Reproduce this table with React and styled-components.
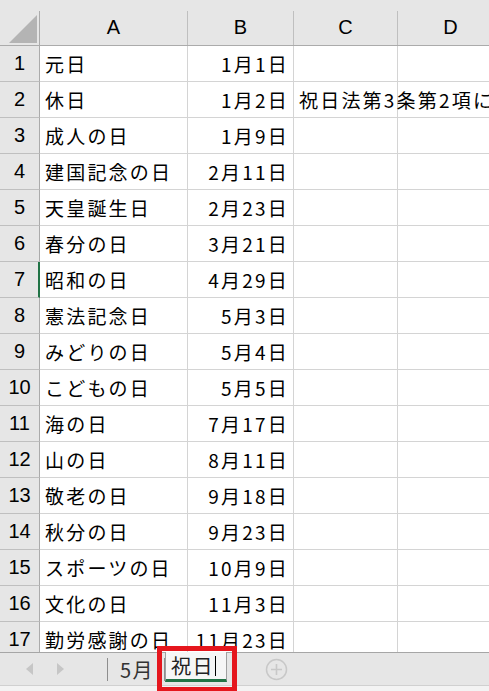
import React from 'react';
import styled, { createGlobalStyle } from 'styled-components';

const GlobalStyle = createGlobalStyle`
  html, body {
    margin: 0;
    padding: 0;
    overflow: hidden;
    background: #ffffff;
  }
`;

const COLS = '40px 148px 106px 104px 106px';

const Sheet = styled.div`
  position: relative;
  display: flex;
  flex-direction: column;
  width: 489px;
  height: 691px;
  overflow: hidden;
  font-family: "Noto Sans CJK JP", "Noto Sans", sans-serif;
  color: #000;
`;

const HeaderRow = styled.div`
  display: grid;
  grid-template-columns: ${COLS};
  height: 46px;
  padding-top: 11px;
  box-sizing: border-box;
  background: #e6e6e6;
  border-bottom: 1px solid #ababab;
  flex-shrink: 0;
`;

const Corner = styled.div`
  position: relative;
  border-right: 1px solid #ababab;
`;

const CornerTriangle = styled.div`
  position: absolute;
  left: 9px;
  top: 4px;
  width: 0;
  height: 0;
  border-style: solid;
  border-width: 0 0 28px 28px;
  border-color: transparent transparent #b4b4b4 transparent;
`;

const ColHead = styled.div`
  display: flex;
  align-items: center;
  justify-content: center;
  border-right: 1px solid #bfbfbf;
  font-family: "Liberation Sans", Arial, sans-serif;
  font-size: 20px;
  padding-bottom: 2px;
`;

const Body = styled.div`
  flex: 1;
  min-height: 0;
  overflow: hidden;
`;

const Row = styled.div`
  display: grid;
  grid-template-columns: ${COLS};
  height: 36px;
`;

const RowHead = styled.div`
  display: flex;
  align-items: center;
  justify-content: center;
  background: #e6e6e6;
  border-right: ${(p) => (p.active ? '2px solid #217346' : '1px solid #ababab')};
  border-bottom: 1px solid #bfbfbf;
  font-family: "Liberation Sans", Arial, sans-serif;
  font-size: 20px;
  padding-left: ${(p) => (p.active ? '1px' : '0')};
`;

const Cell = styled.div`
  display: flex;
  align-items: center;
  justify-content: ${(p) => (p.right ? 'flex-end' : 'flex-start')};
  padding: 0 4px 0 5px;
  border-right: 1px solid #d4d4d4;
  border-bottom: 1px solid #d4d4d4;
  font-size: 19px;
  letter-spacing: 2.2px;
  white-space: nowrap;
  overflow: visible;
  min-width: 0;
  position: relative;
  z-index: ${(p) => (p.overflow ? 1 : 0)};
`;

const TabBar = styled.div`
  display: flex;
  align-items: stretch;
  height: 32px;
  background: #e6e6e6;
  border-top: 1px solid #a6a6a6;
  border-bottom: 1px solid #d0d0d0;
  flex-shrink: 0;
`;

const NavArrows = styled.div`
  display: flex;
  align-items: center;
  gap: 24px;
  padding-left: 26px;
  width: 107px;
  box-sizing: border-box;
`;

const Arrow = styled.div`
  width: 0;
  height: 0;
  border-style: solid;
  border-width: 6px 0 6px 7px;
  border-color: transparent transparent transparent #c6c6c6;
  transform: ${(p) => (p.left ? 'scaleX(-1)' : 'none')};
`;

const Divider = styled.div`
  width: 1px;
  background: #8e8e8e;
  margin: 5px 0 4px;
`;

const Tab = styled.div`
  display: flex;
  align-items: center;
  font-size: 20px;
  letter-spacing: 1.5px;
  color: ${(p) => (p.active ? '#222' : '#333')};
  background: ${(p) => (p.active ? '#f6f6f6' : 'transparent')};
  padding: ${(p) => (p.active ? '0 10px 0 5px' : '0 10px 0 12px')};
  border-left: ${(p) => (p.active ? '1px solid #a0a0a0' : 'none')};
  border-right: ${(p) => (p.active ? '1px solid #a0a0a0' : 'none')};
  border-bottom: ${(p) => (p.active ? '3px solid #217346' : 'none')};
  margin: ${(p) => (p.active ? '-1px 0 3px 0' : '0')};
`;

const Caret = styled.span`
  display: inline-block;
  width: 1px;
  height: 20px;
  background: #000;
  margin-left: 1px;
`;

const AddWrap = styled.div`
  display: flex;
  align-items: center;
  margin-left: 38px;
`;

const Footer = styled.div`
  height: 5px;
  flex-shrink: 0;
  background: #f3f3f3;
`;

const Highlight = styled.div`
  position: absolute;
  left: 157px;
  top: 646px;
  width: 80px;
  height: 46px;
  box-sizing: border-box;
  border: 5px solid #e5161d;
  pointer-events: none;
`;

const holidays = [
  ['元日', '1月1日'],
  ['休日', '1月2日', '祝日法第3条第2項に'],
  ['成人の日', '1月9日'],
  ['建国記念の日', '2月11日'],
  ['天皇誕生日', '2月23日'],
  ['春分の日', '3月21日'],
  ['昭和の日', '4月29日'],
  ['憲法記念日', '5月3日'],
  ['みどりの日', '5月4日'],
  ['こどもの日', '5月5日'],
  ['海の日', '7月17日'],
  ['山の日', '8月11日'],
  ['敬老の日', '9月18日'],
  ['秋分の日', '9月23日'],
  ['スポーツの日', '10月9日'],
  ['文化の日', '11月3日'],
  ['勤労感謝の日', '11月23日'],
];

const AddIcon = () => (
  <svg width="23" height="23" viewBox="0 0 23 23">
    <circle cx="11.5" cy="11.5" r="10" fill="none" stroke="#c8c8c8" strokeWidth="1.5" />
    <path d="M11.5 6v11M6 11.5h11" stroke="#c8c8c8" strokeWidth="1.6" />
  </svg>
);

const App = () => {
  return (
    <Sheet>
      <GlobalStyle />
      <HeaderRow>
        <Corner>
          <CornerTriangle />
        </Corner>
        {['A', 'B', 'C', 'D'].map((c) => (
          <ColHead key={c}>{c}</ColHead>
        ))}
      </HeaderRow>

      <Body>
        {holidays.map(([name, date, note], i) => (
          <Row key={name}>
            <RowHead active={i === 6}>{i + 1}</RowHead>
            <Cell>{name}</Cell>
            <Cell right>{date}</Cell>
            <Cell overflow={!!note}>{note}</Cell>
            <Cell />
          </Row>
        ))}
      </Body>

      <TabBar>
        <NavArrows>
          <Arrow left />
          <Arrow />
        </NavArrows>
        <Divider />
        <Tab>5月</Tab>
        <Divider />
        <Tab active>
          祝日
          <Caret />
        </Tab>
        <AddWrap>
          <AddIcon />
        </AddWrap>
      </TabBar>
      <Footer />

      <Highlight />
    </Sheet>
  );
};

export default App;
